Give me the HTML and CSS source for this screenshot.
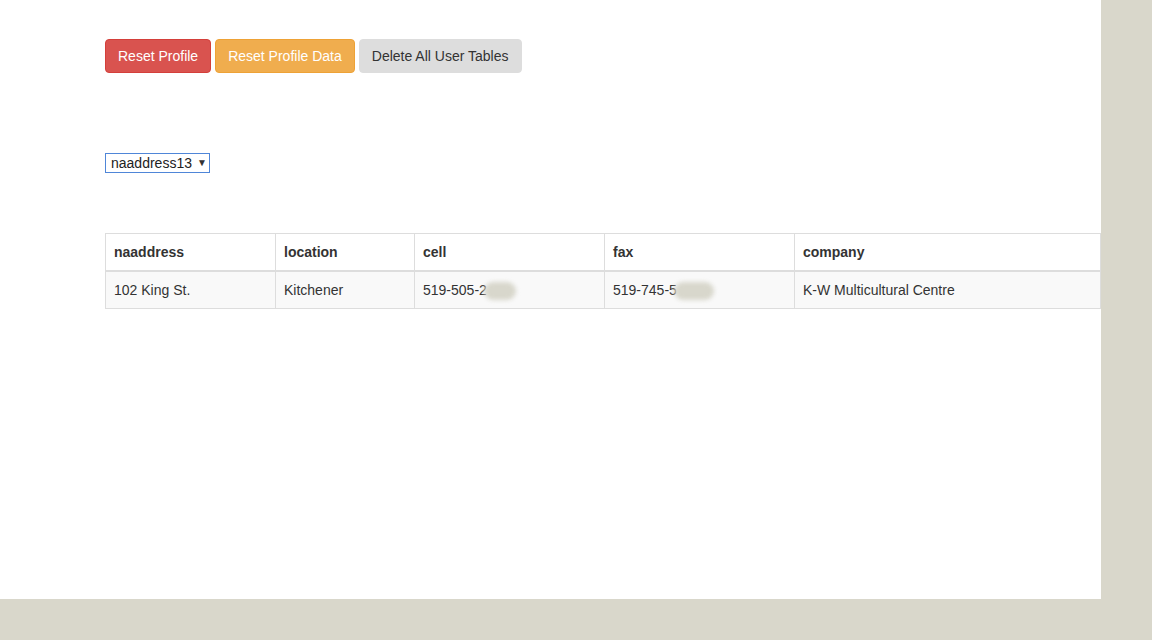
FILE: index.html
```html
<!DOCTYPE html>
<html>
<head>
<meta charset="utf-8">
<link rel="stylesheet" href="styles.css">
</head>
<body>
<div class="page">
  <div class="actions">
    <button class="btn btn-danger">Reset Profile</button>
    <button class="btn btn-warning">Reset Profile Data</button>
    <button class="btn btn-default">Delete All User Tables</button>
  </div>
  <div class="picker">
    <div class="select"><span>naaddress13</span><span class="arrow">▼</span></div>
  </div>
  <table class="data">
    <colgroup>
      <col style="width:170px">
      <col style="width:139px">
      <col style="width:190px">
      <col style="width:190px">
      <col style="width:306px">
    </colgroup>
    <thead>
      <tr><th>naaddress</th><th>location</th><th>cell</th><th>fax</th><th>company</th></tr>
    </thead>
    <tbody>
      <tr>
        <td>102 King St.</td>
        <td>Kitchener</td>
        <td>519-505-2<span class="blur b1"></span></td>
        <td>519-745-5<span class="blur b2"></span></td>
        <td>K-W Multicultural Centre</td>
      </tr>
    </tbody>
  </table>
</div>
</body>
</html>
```

FILE: styles.css
```css
html, body {
  margin: 0;
  padding: 0;
  background: #d9d7cb;
  height: 640px;
  overflow: hidden;
}
.page {
  width: 1101px;
  height: 599px;
  background: #fff;
  box-sizing: border-box;
  padding: 39px 0 0 105px;
  font-family: "Liberation Sans", Arial, sans-serif;
  font-size: 14px;
  color: #333;
}
.actions {
  display: flex;
  gap: 4px;
  height: 34px;
}
.btn {
  font-family: "Liberation Sans", Arial, sans-serif;
  font-size: 14px;
  line-height: 20px;
  padding: 6px 12px;
  border: 1px solid transparent;
  border-radius: 4px;
  height: 34px;
  box-sizing: border-box;
  cursor: pointer;
}
.btn-danger {
  background: #d9534f;
  border-color: #d43f3a;
  color: #fff;
}
.btn-warning {
  background: #f0ad4e;
  border-color: #eea236;
  color: #fff;
}
.btn-default {
  background: #dddddd;
  border-color: #dddddd;
  color: #333;
  padding-right: 13px;
}
.picker {
  margin-top: 80px;
  height: 20px;
}
.select {
  display: inline-flex;
  align-items: center;
  gap: 5px;
  height: 20px;
  width: 105px;
  box-sizing: border-box;
  border: 1px solid #4f86d8;
  padding: 0 4px 0 5px;
  font-size: 14px;
  color: #222;
  line-height: 18px;
}
.select .arrow {
  font-size: 10px;
  color: #333;
}
.data {
  margin-top: 60px;
  border-collapse: collapse;
  table-layout: fixed;
  width: 996px;
  border-top: 1px solid #ddd;
}
.data th, .data td {
  text-align: left;
  padding: 8px;
  line-height: 20px;
  border: 1px solid #ddd;
}
.data th {
  font-weight: bold;
  border-bottom: 2px solid #ddd;
  border-top: 0;
}
.data tbody tr {
  background: #f9f9f9;
}
.blur {
  display: inline-block;
  vertical-align: middle;
  height: 18px;
  background: #d8d7cc;
  border-radius: 9px;
  filter: blur(2px);
  margin-left: -3px;
}
.b1 { width: 32px; }
.b2 { width: 40px; }
```
